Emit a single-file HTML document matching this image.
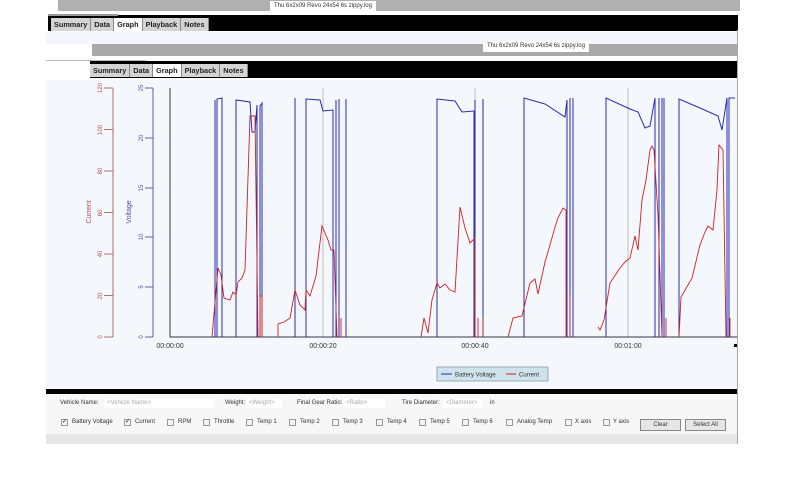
<!DOCTYPE html>
<html><head><style>
*{margin:0;padding:0;box-sizing:border-box}
body{width:800px;height:500px;background:#fff;position:relative;overflow:hidden;font-family:"Liberation Sans",sans-serif}
.a{position:absolute}
.tabs{position:absolute;display:flex;height:13px;font-size:7.3px;font-weight:bold}
.tabs div{padding:1px 3px;background:#d4d4d4;border-right:1px solid #888;color:#222;line-height:11px}
.tabs div.s{background:#fff}
.f{font-size:6px;color:#333;white-space:nowrap;line-height:9px}
.cb{position:absolute;top:419px;width:7px;height:7px;border:1px solid #999;background:#f4f4f4;font-size:6px;line-height:5px;text-align:center}
.lb{position:absolute;top:418px}
.inp{position:absolute;top:399px;height:9px;background:#fff;color:#aaa;padding:0 3px;font-size:6px;line-height:9px}
</style></head><body>
<div class="a" style="left:58px;top:0;width:682px;height:11px;background:#b0b0b0"></div>
<div class="a" style="left:270px;top:1px;width:106px;height:10px;background:#fff;font-size:6px;line-height:10px;text-align:center;color:#333">Thu 6x2x09 Revo 24x54 6s zippy.log</div>
<div class="a" style="left:48px;top:15px;width:690px;height:16px;background:#000"></div>
<div class="a" style="left:48px;top:14px;width:70px;height:2px;background:#999"></div>
<div class="tabs" style="left:51px;top:18px"><div>Summary</div><div>Data</div><div class="s">Graph</div><div>Playback</div><div>Notes</div></div>
<div class="a" style="left:46px;top:32px;width:692px;height:12px;background:#f3f6fa"></div>
<div class="a" style="left:92px;top:44px;width:645px;height:12px;background:#a9a9a9"></div>
<div class="a" style="left:483px;top:41px;width:106px;height:11px;background:#fff;font-size:6px;line-height:11px;text-align:center;color:#333">Thu 6x2x09 Revo 24x54 6s zippy.log</div>
<div class="a" style="left:46px;top:60px;width:100px;height:1px;background:#bbb"></div>
<div class="a" style="left:90px;top:61px;width:647px;height:17px;background:#000"></div>
<div class="tabs" style="left:90px;top:64px"><div>Summary</div><div>Data</div><div class="s">Graph</div><div>Playback</div><div>Notes</div></div>
<div class="a" style="left:737px;top:30px;width:1px;height:414px;background:#aaa"></div>
<div class="a" style="left:46px;top:80px;width:691px;height:308px;background:#f4f8fd"></div>
<svg class="a" style="left:0;top:0" width="800" height="400" viewBox="0 0 800 400">
<g stroke="#b07070" fill="none" stroke-width="1"><path d="M113 88V337M104 88H113M104 129.5H113M104 171H113M104 212.5H113M104 254H113M104 295.5H113M104 337H113"/></g>
<g stroke="#6060a0" fill="none"><path d="M153 88V337M145 88H153M145 138H153M145 188H153M145 237H153M145 287H153M145 337H153"/></g>
<g font-size="6" fill="#b05050" font-family="Liberation Sans">
<text transform="translate(102,88) rotate(-90)" text-anchor="middle">120</text>
<text transform="translate(102,130) rotate(-90)" text-anchor="middle">100</text>
<text transform="translate(102,171) rotate(-90)" text-anchor="middle">80</text>
<text transform="translate(102,213) rotate(-90)" text-anchor="middle">60</text>
<text transform="translate(102,254) rotate(-90)" text-anchor="middle">40</text>
<text transform="translate(102,296) rotate(-90)" text-anchor="middle">20</text>
<text transform="translate(102,337) rotate(-90)" text-anchor="middle">0</text>
<text transform="translate(91,212) rotate(-90)" text-anchor="middle" font-size="7">Current</text>
</g>
<g font-size="6" fill="#5050a0" font-family="Liberation Sans">
<text transform="translate(143,88) rotate(-90)" text-anchor="middle">25</text>
<text transform="translate(143,138) rotate(-90)" text-anchor="middle">20</text>
<text transform="translate(143,188) rotate(-90)" text-anchor="middle">15</text>
<text transform="translate(143,237) rotate(-90)" text-anchor="middle">10</text>
<text transform="translate(143,287) rotate(-90)" text-anchor="middle">5</text>
<text transform="translate(143,337) rotate(-90)" text-anchor="middle">0</text>
<text transform="translate(131,212) rotate(-90)" text-anchor="middle" font-size="7">Voltage</text>
</g>
<g stroke="#bbb"><path d="M323 88V337M475 88V337M628 88V337"/></g>
<path d="M170 88V337H737" stroke="#334" fill="none"/>
<g font-size="7" fill="#333" text-anchor="middle" font-family="Liberation Sans">
<text x="170" y="348">00:00:00</text><text x="323" y="348">00:00:20</text><text x="475" y="348">00:00:40</text><text x="628" y="348">00:01:00</text>
</g>
<g stroke="#2a2ab0" fill="none" stroke-width="1">
<path d="M215 337V100M217 337V99L222 98V337M236 337V100L250 102L252 132L255 132L257 105V337M260 337V106L262 103V337"/>
<path d="M295 337V98V337M306 337V99L320 100L323 111L333 110V337M336 337V100V337M339 337V99V337M346 337V99V337"/>
<path d="M437 337V99L455 101L462 112L474 111V337M475 337V100V337M483 337V99V337"/>
<path d="M524 337V98L545 104L565 117L567 100V337M570 337V98V337M573 337V98V337"/>
<path d="M606 337V98L630 109L638 112L645 128L650 126L655 98V337M659 337V98V337M662 337V98V337M664 337V98V337"/>
<path d="M679 337V99L700 108L718 116L722 130L727 98V337M729 337V98L735 98"/>
</g>
<g stroke="#d02020" fill="none" stroke-width="0.9">
<path d="M212 337L218 268L221 275L224 298L230 300L233 292L236 295L238 282L242 278L245 270L250 116L255 116L258 337M260 337V296L262 296V337"/>
<path d="M278 337V324L284 322L290 318L295 290L300 305L305 310L306 290L310 296L316 276L322 226L328 240L331 250L334 250L337 337M341 337V318V337"/>
<path d="M421 337L424 318L428 333L432 300L437 283L440 288L445 284L450 290L455 292L460 207L465 228L470 243L475 238V337M478 337V318V337M483 337V318V337"/>
<path d="M508 337L513 318L522 316L530 283L535 279L538 294L545 262L550 245L555 227L558 218L563 208L566 210V337M570 337V295V337"/>
<path d="M598 327L600 330L604 320L610 283L620 268L625 262L630 258L635 236L638 250L642 200L646 180L650 150L652 146L654 150L658 215L662 337M666 337V318V337"/>
<path d="M679 337L681 297L688 285L692 278L700 245L705 232L708 226L713 230L717 190L719 145L723 150L726 337M730 337V318V337"/>
</g>
<rect x="437" y="367" width="111" height="14" fill="#cfe3ec" stroke="#9ab"/>
<path d="M441 374H452" stroke="#2a2ab0"/><path d="M506 374H516" stroke="#d02020"/>
<text x="455" y="376.5" font-size="6" fill="#333" font-family="Liberation Sans">Battery Voltage</text>
<text x="519" y="376.5" font-size="6" fill="#333" font-family="Liberation Sans">Current</text>
<rect x="734" y="344" width="3" height="3" fill="#000"/>
</svg>
<div class="a" style="left:46px;top:389px;width:691px;height:5px;background:#000"></div>
<div class="a" style="left:46px;top:394px;width:691px;height:40px;background:#f7f7f7"></div>
<div class="a" style="left:46px;top:434px;width:691px;height:10px;background:#e6e6e6"></div>
<div class="a f" style="left:60px;top:399px">Vehicle Name:</div>
<div class="inp" style="left:104px;width:110px">&lt;Vehicle Name&gt;</div>
<div class="a f" style="left:225px;top:399px">Weight:</div>
<div class="inp" style="left:246px;width:36px">&lt;Weight&gt;</div>
<div class="a f" style="left:297px;top:399px">Final Gear Ratio:</div>
<div class="inp" style="left:343px;width:42px">&lt;Ratio&gt;</div>
<div class="a f" style="left:402px;top:399px">Tire Diameter:</div>
<div class="inp" style="left:443px;width:40px">&lt;Diameter&gt;</div>
<div class="a f" style="left:490px;top:399px">in</div>

<div class="cb" style="left:61px">✓</div><div class="a f lb" style="left:72px">Battery Voltage</div>
<div class="cb" style="left:124px">✓</div><div class="a f lb" style="left:135px">Current</div>
<div class="cb" style="left:167px"></div><div class="a f lb" style="left:178px">RPM</div>
<div class="cb" style="left:203px"></div><div class="a f lb" style="left:214px">Throttle</div>
<div class="cb" style="left:246px"></div><div class="a f lb" style="left:257px">Temp 1</div>
<div class="cb" style="left:289px"></div><div class="a f lb" style="left:300px">Temp 2</div>
<div class="cb" style="left:332px"></div><div class="a f lb" style="left:343px">Temp 3</div>
<div class="cb" style="left:376px"></div><div class="a f lb" style="left:387px">Temp 4</div>
<div class="cb" style="left:419px"></div><div class="a f lb" style="left:430px">Temp 5</div>
<div class="cb" style="left:462px"></div><div class="a f lb" style="left:473px">Temp 6</div>
<div class="cb" style="left:506px"></div><div class="a f lb" style="left:517px">Analog Temp</div>
<div class="cb" style="left:565px"></div><div class="a f lb" style="left:575px">X axis</div>
<div class="cb" style="left:603px"></div><div class="a f lb" style="left:613px">Y axis</div>
<div class="a f" style="left:640px;top:419px;width:41px;height:12px;border:1px solid #888;background:#e6e6e6;text-align:center;line-height:11px">Clear</div>
<div class="a f" style="left:685px;top:419px;width:41px;height:12px;border:1px solid #888;background:#e6e6e6;text-align:center;line-height:11px">Select All</div>
</body></html>
